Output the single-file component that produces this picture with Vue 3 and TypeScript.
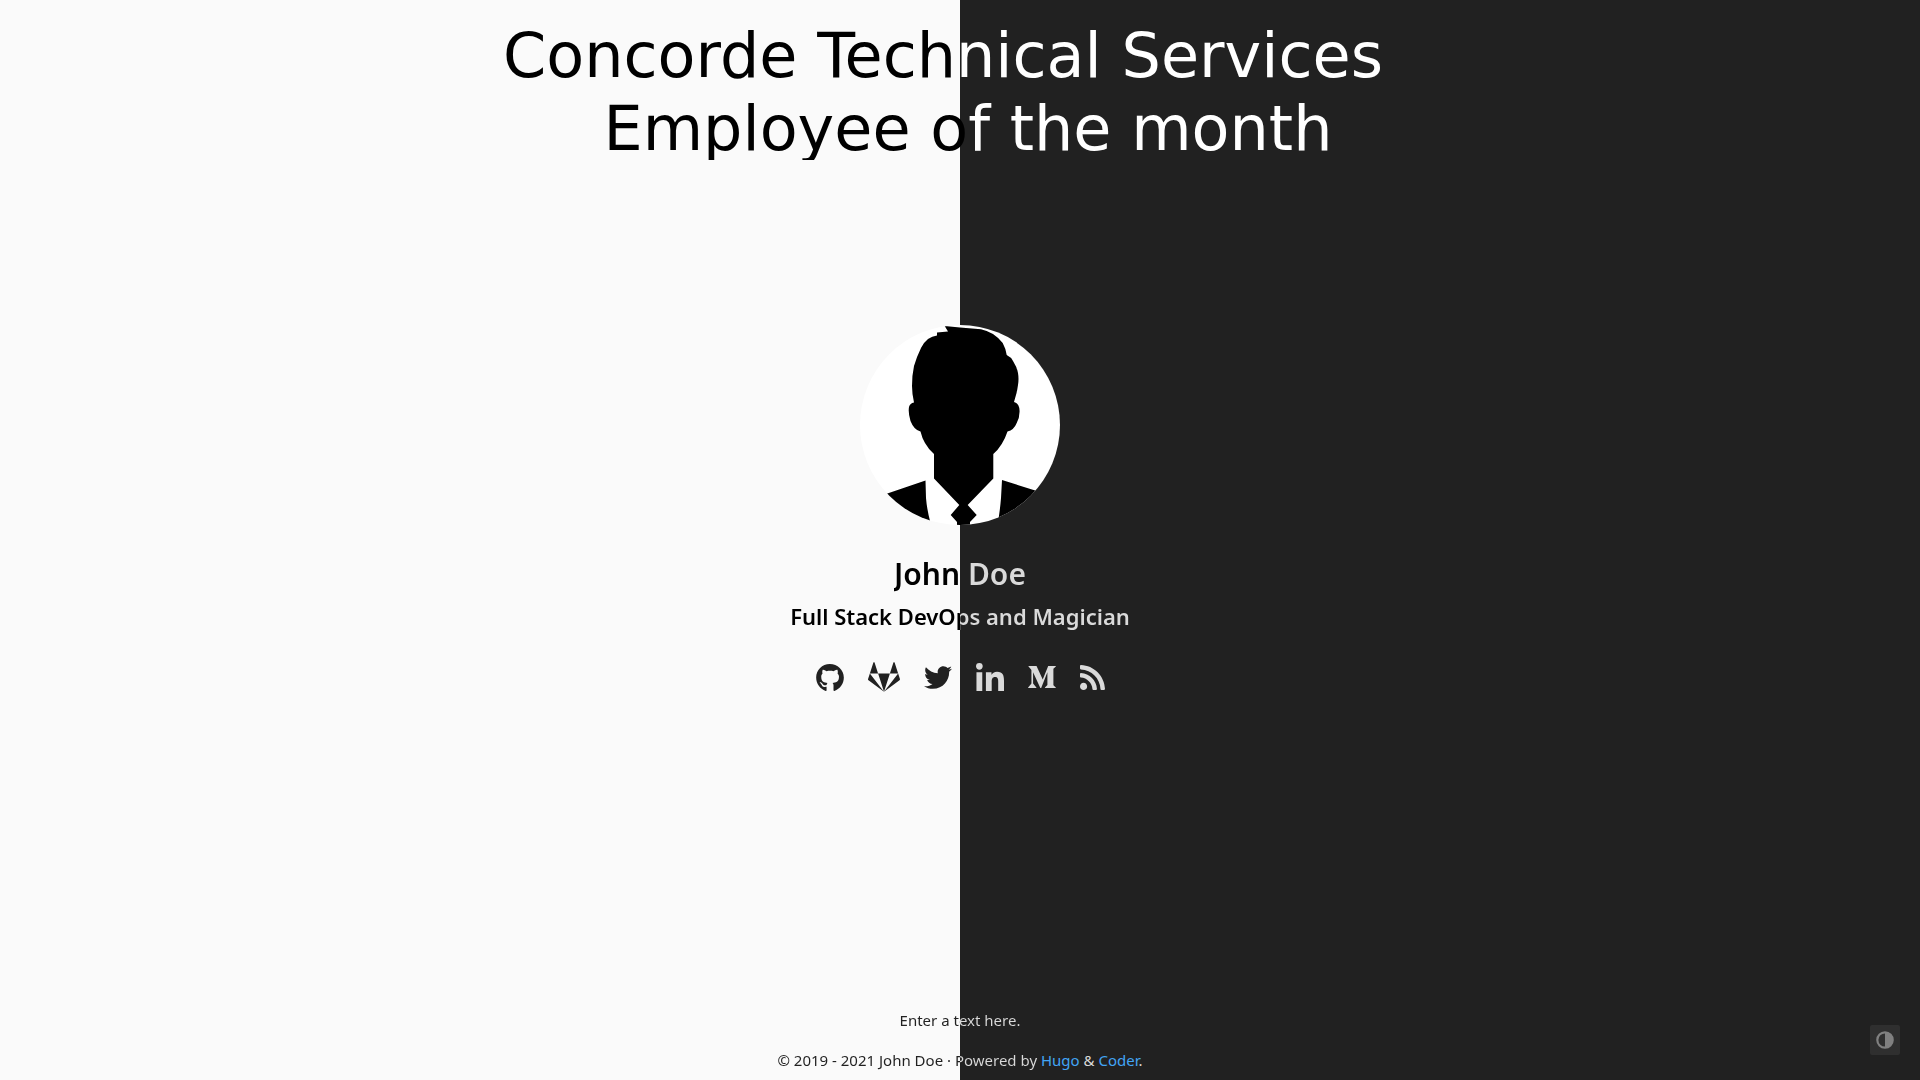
<script setup lang="ts">
import { ref } from 'vue'

interface SocialLink {
  name: string
  viewBox: string
  width: number
  height: number
  dark: boolean
  path: string
}

const socials: SocialLink[] = [
  {
    name: 'Github',
    viewBox: '0 8 496 484',
    width: 28,
    height: 27,
    dark: true,
    path: 'M244.8 8C106.1 8 0 113.3 0 252c0 110.9 69.8 205.8 169.5 239.2 12.8 2.3 17.3-5.6 17.3-12.1 0-6.2-.3-40.4-.3-61.4 0 0-70 15-84.7-29.8 0 0-11.4-29.1-27.8-36.6 0 0-22.9-15.7 1.6-15.4 0 0 24.9 2 38.6 25.8 21.9 38.6 58.6 27.5 72.9 20.9 2.3-16 8.8-27.1 16-33.7-55.9-6.2-112.3-14.3-112.3-110.5 0-27.5 7.6-41.3 23.6-58.9-2.6-6.5-11.1-33.3 2.6-67.9 20.9-6.5 69 27 69 27 20-5.6 41.5-8.5 62.8-8.5s42.8 2.9 62.8 8.5c0 0 48.1-33.6 69-27 13.7 34.7 5.2 61.4 2.6 67.9 16 17.7 25.8 31.5 25.8 58.9 0 96.5-58.9 104.2-114.8 110.5 9.2 7.9 17 22.9 17 46.4 0 33.7-.3 75.4-.3 83.6 0 6.5 4.6 14.4 17.3 12.1C428.2 457.8 496 362.9 496 252 496 113.3 383.5 8 244.8 8z',
  },
  {
    name: 'Gitlab',
    viewBox: '0 18 512 476',
    width: 32,
    height: 30,
    dark: true,
    path: 'M105.2 24.9c-3.1-8.9-15.7-8.9-18.9 0L29.8 199.7h132c-.1 0-56.6-174.8-56.6-174.8zM.9 287.7c-2.6 8 .3 16.9 7.1 22l247.9 184-226.2-294zm160.8-88l94.3 294 94.3-294zm349.4 88l-28.8-88-226.3 294 247.9-184c6.9-5.1 9.7-14 7.2-22zM425.7 24.9c-3.1-8.9-15.7-8.9-18.9 0l-56.6 174.8h132z',
  },
  {
    name: 'Twitter',
    viewBox: '0 48 512 416',
    width: 28,
    height: 23,
    dark: true,
    path: 'M459.37 151.716c.325 4.548.325 9.097.325 13.645 0 138.72-105.583 298.558-298.558 298.558-59.452 0-114.68-17.219-161.137-47.106 8.447.974 16.568 1.299 25.34 1.299 49.055 0 94.213-16.568 130.274-44.832-46.132-.975-84.792-31.188-98.112-72.772 6.498.974 12.995 1.624 19.818 1.624 9.421 0 18.843-1.3 27.614-3.573-48.081-9.747-84.143-51.98-84.143-102.985v-1.299c13.969 7.797 30.214 12.67 47.431 13.319-28.264-18.843-46.781-51.005-46.781-87.391 0-19.492 5.197-37.36 14.294-52.954 51.655 63.675 129.3 105.258 216.365 109.807-1.624-7.797-2.599-15.918-2.599-24.04 0-57.828 46.782-104.934 104.934-104.934 30.213 0 57.502 12.67 76.67 33.137 23.715-4.548 46.456-13.32 66.599-25.34-7.798 24.366-24.366 44.833-46.132 57.827 21.117-2.273 41.584-8.122 60.426-16.243-14.292 20.791-32.161 39.308-52.628 54.253z',
  },
  {
    name: 'LinkedIn',
    viewBox: '0 0 448 448',
    width: 28,
    height: 28,
    dark: false,
    path: 'M100.28 448H7.4V148.9h92.88zM53.79 108.1C24.09 108.1 0 83.5 0 53.8a53.79 53.79 0 0 1 107.58 0c0 29.7-24.1 54.3-53.79 54.3zM447.9 448h-92.68V302.4c0-34.7-.7-79.2-48.29-79.2-48.29 0-55.69 37.7-55.69 76.7V448h-92.78V148.9h89.08v40.8h1.3c12.4-23.5 42.69-48.3 87.88-48.3 94 0 111.28 61.9 111.28 142.3V448z',
  },
  {
    name: 'Medium',
    viewBox: '14 64 484 384',
    width: 28,
    height: 22,
    dark: false,
    path: 'M71.5 142.3c.6-5.9-1.7-11.8-6.1-15.8L20.3 72.1V64h140.2l108.4 237.7L364.2 64h133.7v8.1l-38.6 37c-3.3 2.5-5 6.7-4.3 10.8v272c-.7 4.1 1 8.3 4.3 10.8l37.7 37v8.1H307.3v-8.1l39.1-37.9c3.8-3.8 3.8-5 3.8-10.8V171.2L241.5 447.1h-14.7L100.4 171.2v184.9c-1.1 7.8 1.5 15.6 7 21.2l50.8 61.6v8.1h-144v-8L65 377.3c5.4-5.6 7.9-13.5 6.5-21.2V142.3z',
  },
  {
    name: 'RSS',
    viewBox: '0 32 448 448',
    width: 25,
    height: 25,
    dark: false,
    path: 'M128.081 415.959c0 35.369-28.672 64.041-64.041 64.041S0 451.328 0 415.959s28.672-64.041 64.041-64.041 64.04 28.673 64.04 64.041zm175.66 47.25c-8.354-154.6-132.185-278.587-286.95-286.95C7.656 175.765 0 183.105 0 192.253v48.069c0 8.415 6.49 15.472 14.887 16.018 111.832 7.284 201.473 96.702 208.772 208.772.547 8.397 7.604 14.887 16.018 14.887h48.069c9.149.001 16.489-7.655 15.995-16.79zm144.249.288C439.596 229.677 251.465 40.445 16.503 32.01 7.473 31.686 0 38.981 0 48.016v48.068c0 8.625 6.835 15.645 15.453 15.999 191.179 7.839 344.627 161.316 352.465 352.465.353 8.618 7.373 15.453 15.998 15.453h48.068c9.034-.001 16.329-7.474 16.006-16.504z',
  },
]

const swapped = ref(false)
</script>

<template>
  <div class="page" :class="{ swapped }">
    <header class="banner">
      <div class="banner-line first">Concorde Tech<span>nical Services</span></div>
      <div class="banner-line second">Employee o<span>f the month</span></div>
    </header>

    <main class="profile">
      <svg class="avatar" viewBox="0 0 200 200" role="img" aria-label="Avatar">
        <defs>
          <clipPath id="avatar-circle"><circle cx="100" cy="100" r="100" /></clipPath>
        </defs>
        <g clip-path="url(#avatar-circle)">
          <rect width="200" height="200" fill="#fff" />
          <path
            d="M84.700 1L100 2.500L121 4.300Q128 6 133 9Q139 13 142.700 18Q146 24 146.700 30Q151 32 153 36Q157 42 158 48Q159 54 158 60Q157 68 154 77Q159 78 159.500 85Q160 92 156.700 98Q154 105 147.500 106.500Q145 114 141.700 119Q138 125 133.300 129V153.500L107.700 180L116.700 190L110 197V200H97V197L90.700 190L99.300 180L74 153.500V129Q69 125 65 118Q62 113 60.500 106.500Q54 105 50.500 96Q48 88 49 82Q50 78 54 77.500Q52 69 52 61Q52 50 54 41Q57 31 61 23Q64 17 68 14Q72 11 77 10.500V7.500L88 6.500Z"
          />
          <path d="M20 171L65.500 155.500L66 173Q67 185 70.500 198L60 200Z" />
          <path d="M142 155L180 167L160 200H137.500Q140 186 141 173Z" />
        </g>
      </svg>
      <h1><span class="split-text strong">John Doe</span></h1>
      <h2><span class="split-text strong">Full Stack DevOps and Magician</span></h2>
      <ul class="socials">
        <li v-for="item in socials" :key="item.name">
          <a href="#" :aria-label="item.name" :class="{ dark: item.dark }">
            <svg :viewBox="item.viewBox" :width="item.width" :height="item.height" aria-hidden="true">
              <path :d="item.path" />
            </svg>
          </a>
        </li>
      </ul>
    </main>

    <footer class="footer">
      <p><span class="split-text">Enter a text here.</span></p>
      <p>
        <span class="split-text">© 2019 - 2021 John Doe · Powered by&#32;</span> <a href="#">Hugo</a> &amp;
        <a href="#">Coder</a>.
      </p>
    </footer>

    <button class="toggle" type="button" aria-label="Toggle colour scheme" @click="swapped = !swapped">
      <svg viewBox="0 0 18 18" width="18" height="18" aria-hidden="true">
        <circle cx="9" cy="9" r="7.700" fill="none" stroke="currentColor" stroke-width="2.200" />
        <path d="M9 1A8 8 0 0 1 9 17Z" fill="currentColor" />
      </svg>
    </button>
  </div>
</template>

<style>
body {
  margin: 0;
}
</style>

<style scoped>
.page {
  --left: #fafafa;
  --right: #212121;
  position: relative;
  display: flex;
  flex-direction: column;
  min-height: 100vh;
  background: linear-gradient(to right, var(--left) 50%, var(--right) 50%);
  font-family: 'Noto Sans', 'Open Sans', sans-serif;
}

.page.swapped {
  --left: #212121;
  --right: #fafafa;
}

.banner {
  box-sizing: border-box;
  height: 160px;
  padding-top: 19px;
  overflow: hidden;
  color: #000;
  font-family: 'DejaVu Sans', sans-serif;
  font-size: 62px;
  line-height: 73px;
  text-align: center;
  white-space: nowrap;
}

.banner-line span {
  color: #fff;
}

.first {
  padding-right: 34px;
}

.second {
  padding-left: 16px;
}

.profile {
  display: flex;
  flex: 1;
  flex-direction: column;
  align-items: center;
  padding-top: 165px;
}

.avatar {
  width: 200px;
  height: 200px;
}

/* The gradient is fixed to the window, so the text changes colour on the page's middle line. */
.split-text {
  background: linear-gradient(to right, #212121 50%, #dadada 50%) fixed;
  background-clip: text;
  color: transparent;
}

.split-text.strong {
  background-image: linear-gradient(to right, #000 50%, #dadada 50%);
}

h1,
h2,
p {
  margin: 0;
  text-align: center;
}

h1 {
  padding-top: 28px;
  font-size: 30px;
  font-weight: 600;
  line-height: 42px;
}

h2 {
  padding-top: 5px;
  font-size: 22px;
  font-weight: 600;
  line-height: 32px;
}

.socials {
  display: flex;
  gap: 24px;
  align-items: center;
  height: 30px;
  margin: 30px 0 0;
  padding: 0;
  list-style: none;
}

.socials a {
  display: flex;
  color: #dadada;
}

.socials a.dark {
  color: #212121;
}

.socials svg {
  fill: currentColor;
}

.footer {
  display: flex;
  flex-direction: column;
  gap: 16px;
  padding-bottom: 8px;
  color: #dadada;
  font-size: 15px;
  line-height: 24px;
}

.footer a {
  color: #42a5f5;
  text-decoration: none;
}

.toggle {
  position: absolute;
  right: 20px;
  bottom: 25px;
  display: flex;
  align-items: center;
  justify-content: center;
  width: 30px;
  height: 30px;
  padding: 0;
  border: 0;
  border-radius: 2px;
  background: #2f2f2f;
  color: #808080;
}
</style>
